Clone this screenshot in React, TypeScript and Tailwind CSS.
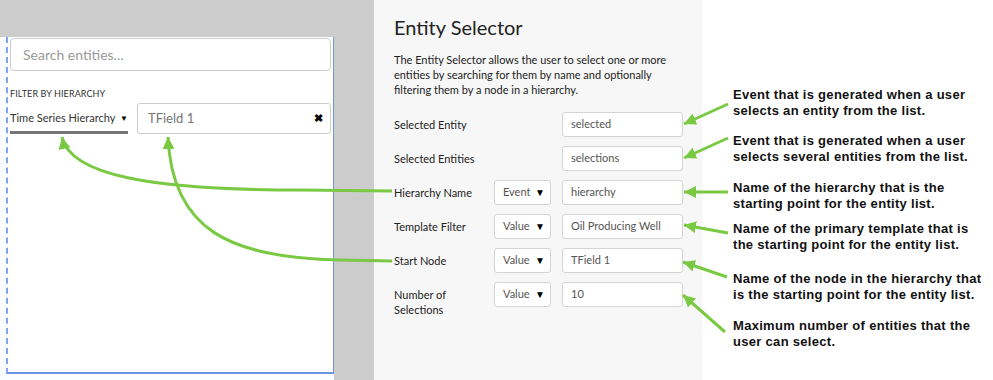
import React from "react";

const green = "#7ac943";

function Row({
  label,
  value,
  select,
}: {
  label: React.ReactNode;
  value: string;
  select?: string;
}) {
  return (
    <div className="flex items-start h-[25px]">
      <div className="w-[100px] pt-[5px] leading-[15px] text-[11px] text-[#222]">{label}</div>
      <div className="w-[68px] shrink-0">
        {select && (
          <div className="w-[57px] h-[25px] bg-white border border-[#d4d4d4] rounded-[3px] flex items-center justify-between pl-[8px] pr-[5px] text-[11px] text-[#555]">
            <span>{select}</span>
            <span className="text-[10px] text-black">▼</span>
          </div>
        )}
      </div>
      <div className="w-[121px] h-[25px] bg-white border border-[#d4d4d4] rounded-[3px] flex items-center pl-[8px] text-[11px] text-[#555]">
        {value}
      </div>
    </div>
  );
}

function Note({ lines, mt }: { lines: string[]; mt: string }) {
  return (
    <div className={mt}>
      {lines.map((l, i) => (
        <div key={i} className="whitespace-nowrap">
          {l}
        </div>
      ))}
    </div>
  );
}

export default function App() {
  return (
    <div className="relative w-[993px] h-[380px] flex overflow-hidden bg-white font-['Lato',sans-serif]">
      {/* left canvas */}
      <div className="w-[374px] h-full bg-[#cccccc] flex flex-col shrink-0">
        <div className="h-[37px] shrink-0" />
        <div className="w-[334px] flex-1 bg-[#fbfcff]">
          <div className="ml-[6px] w-[328px] h-[337px] bg-white border-l-2 [border-left-style:dashed] border-l-[#7ea6ee] border-r border-r-[#6b96e4] border-b-2 border-b-[#6b96e4] pl-[2px] pr-[2px] pt-[1px]">
            <div className="h-[33px] border border-[#cccccc] rounded-[4px] flex items-center pl-[12px] text-[14px] text-[#9a9a9a]">
              Search entities...
            </div>
            <div className="mt-[18px] text-[9px] text-[#333] tracking-[0.1px] leading-[10px]">
              FILTER BY HIERARCHY
            </div>
            <div className="mt-[4px] flex items-start">
              <div className="w-[118px] shrink-0 h-[31px] flex flex-col justify-end">
                <div className="flex items-center whitespace-nowrap text-[11px] text-[#333] leading-[14px]">
                  <span>Time Series Hierarchy</span>
                  <span className="ml-auto text-[8px] text-black">▼</span>
                </div>
                <div className="mt-[6px] h-[3px] bg-[#777]" />
              </div>
              <div className="ml-[9px] flex-1 h-[31px] border border-[#cccccc] rounded-[3px] flex items-center justify-between pl-[10px] pr-[7px] text-[13px] text-[#777]">
                <span>TField 1</span>
                <span className="text-[11px] text-black font-bold">✖</span>
              </div>
            </div>
          </div>
        </div>
      </div>

      {/* middle panel */}
      <div className="w-[328px] h-full bg-[#f7f7f7] shrink-0 pl-[20px] pt-[14px]">
        <div className="text-[20px] leading-[26px] text-[#222]">Entity Selector</div>
        <div className="mt-[12px] text-[11px] leading-[15px] text-[#222]">
          <div>The Entity Selector allows the user to select one or more</div>
          <div>entities by searching for them by name and optionally</div>
          <div>filtering them by a node in a hierarchy.</div>
        </div>
        <div className="mt-[15px] flex flex-col gap-[9px]">
          <Row label="Selected Entity" value="selected" />
          <Row label="Selected Entities" value="selections" />
          <Row label="Hierarchy Name" select="Event" value="hierarchy" />
          <Row label="Template Filter" select="Value" value="Oil Producing Well" />
          <Row label="Start Node" select="Value" value="TField 1" />
          <Row
            label={
              <>
                Number of
                <br />
                Selections
              </>
            }
            select="Value"
            value="10"
          />
        </div>
      </div>

      {/* annotations */}
      <div className="flex-1 h-full pl-[31px] font-['Liberation_Sans',Arial,sans-serif] font-bold text-[13px] tracking-[0.3px] leading-[15.5px] text-[#111]">
        <Note mt="mt-[87px]" lines={["Event that is generated when a user", "selects an entity from the list."]} />
        <Note mt="mt-[15px]" lines={["Event that is generated when a user", "selects several entities from the list."]} />
        <Note mt="mt-[16px]" lines={["Name of the hierarchy that is the", "starting point for the entity list."]} />
        <Note mt="mt-[10px]" lines={["Name of the primary template that is", "the starting point for the entity list."]} />
        <Note mt="mt-[19px]" lines={["Name of the node in the hierarchy that", "is the starting point for the entity list."]} />
        <Note mt="mt-[16px]" lines={["Maximum number of entities that the", "user can select."]} />
      </div>

      {/* arrows overlay */}
      <svg className="absolute inset-0 pointer-events-none" width="993" height="380" viewBox="0 0 993 380">
        <defs>
          <marker id="ah" markerUnits="userSpaceOnUse" markerWidth="14" markerHeight="12" refX="12" refY="6" orient="auto">
            <path d="M0,0 L12,6 L0,12 Z" fill={green} />
          </marker>
        </defs>
        <g stroke={green} strokeWidth="3" fill="none" strokeLinecap="butt">
          <path d="M392 191 L300 190 C150 190 70 175 62 137" markerEnd="url(#ah)" />
          <path d="M392 261 L340 260 C230 258 172 230 168 137" markerEnd="url(#ah)" />
          <line x1="728" y1="104" x2="684" y2="124" markerEnd="url(#ah)" />
          <line x1="728" y1="138" x2="684" y2="158" markerEnd="url(#ah)" />
          <line x1="728" y1="192" x2="684" y2="192" markerEnd="url(#ah)" />
          <line x1="728" y1="233" x2="684" y2="225" markerEnd="url(#ah)" />
          <line x1="727" y1="277" x2="683" y2="262" markerEnd="url(#ah)" />
          <line x1="725" y1="332" x2="683" y2="295" markerEnd="url(#ah)" />
        </g>
      </svg>
    </div>
  );
}
